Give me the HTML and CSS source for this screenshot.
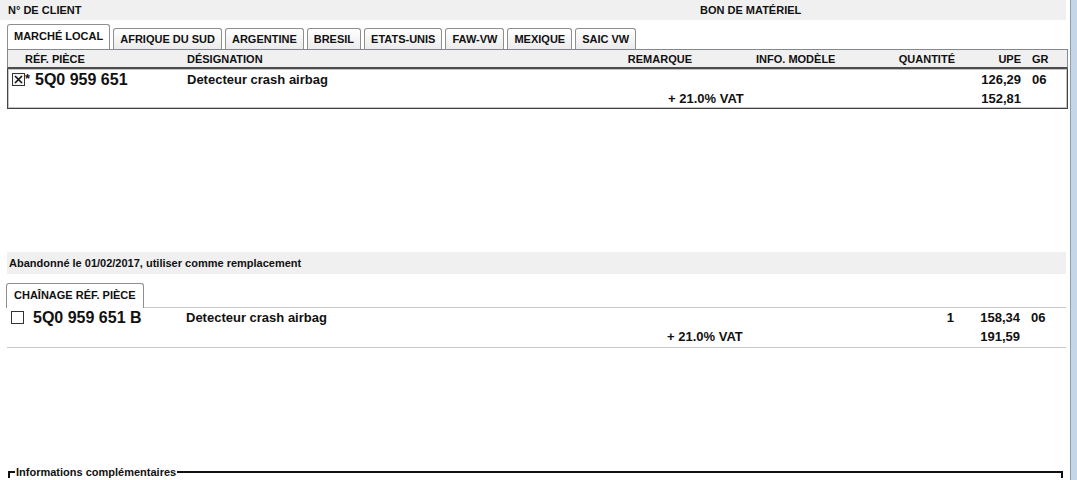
FILE: index.html
```html
<!DOCTYPE html>
<html lang="fr">
<head>
    <meta charset="UTF-8">
    <title>Bon de matériel</title>
    <link rel="stylesheet" href="styles.css">
</head>
<body>
<div class="screen">
    <div class="page">
        <div class="topbar">
            <span>N° DE CLIENT</span>
            <span>BON DE MATÉRIEL</span>
        </div>

        <!-- market tabs -->
        <div class="tabs">
            <span class="tab active">MARCHÉ LOCAL</span>
            <span class="tab">AFRIQUE DU SUD</span>
            <span class="tab">ARGENTINE</span>
            <span class="tab">BRESIL</span>
            <span class="tab">ETATS-UNIS</span>
            <span class="tab">FAW-VW</span>
            <span class="tab">MEXIQUE</span>
            <span class="tab">SAIC VW</span>
        </div>

        <div class="grid-head cols">
            <span class="c-ref">RÉF. PIÈCE</span>
            <span>DÉSIGNATION</span>
            <span class="right">REMARQUE</span>
            <span class="c-info">INFO. MODÈLE</span>
            <span class="right">QUANTITÉ</span>
            <span class="right">UPE</span>
            <span class="c-gr">GR</span>
        </div>

        <div class="grid-body">
            <div class="cols line">
                <span class="c-part">
                    <svg class="check" width="13" height="13" viewBox="0 0 13 13">
                        <rect x="0.5" y="0.5" width="12" height="12" fill="#f4f4f4" stroke="#333"/>
                        <path d="M3 3 L10 10 M10 3 L3 10" stroke="#111" stroke-width="1.6"/>
                    </svg>
                    <sup class="star">*</sup>
                    <span class="part-no">5Q0 959 651</span>
                </span>
                <span class="big">Detecteur crash airbag</span>
                <span></span>
                <span></span>
                <span></span>
                <span class="right big">126,29</span>
                <span class="c-gr big">06</span>
            </div>
            <div class="cols line">
                <span></span>
                <span></span>
                <span class="vat big">+ 21.0% VAT</span>
                <span></span>
                <span class="right big">152,81</span>
                <span></span>
            </div>
        </div>

        <div class="notice">Abandonné le 01/02/2017, utiliser comme remplacement</div>

        <div class="tabs tabs-single">
            <span class="tab active">CHAÎNAGE RÉF. PIÈCE</span>
        </div>

        <div class="chain">
            <div class="cols line">
                <span class="c-part">
                    <svg class="check" width="13" height="13" viewBox="0 0 13 13">
                        <rect x="0.5" y="0.5" width="12" height="12" fill="#fff" stroke="#333"/>
                    </svg>
                    <span class="part-no">5Q0 959 651 B</span>
                </span>
                <span class="big">Detecteur crash airbag</span>
                <span></span>
                <span></span>
                <span class="right big">1</span>
                <span class="right big">158,34</span>
                <span class="c-gr big">06</span>
            </div>
            <div class="cols line">
                <span></span>
                <span></span>
                <span class="vat big">+ 21.0% VAT</span>
                <span></span>
                <span class="right big">191,59</span>
                <span></span>
            </div>
        </div>

        <fieldset class="extra">
            <legend>Informations complémentaires</legend>
        </fieldset>
    </div>
    <div class="edge"><div class="edge-bar"></div></div>
</div>
</body>
</html>
```

FILE: styles.css
```css
body {
    margin: 0;
    font-family: "Liberation Sans", Arial, sans-serif;
    font-weight: bold;
    font-size: 11px;
    color: #111;
    background-color: #ffffff;
    overflow: hidden;
}

.screen {
    display: flex;
    height: 480px;
    overflow: hidden;
}

.page {
    width: 1070px;
}

.edge {
    flex: 1;
    border-left: 1px solid #8f9cab;
    background-color: #c6d6ea;
}

.topbar {
    display: grid;
    grid-template-columns: 692px 1fr;
    align-items: center;
    width: 1058px;
    height: 20px;
    padding-left: 8px;
    background-color: #f0f0f0;
}

.tabs {
    display: flex;
    align-items: flex-end;
    gap: 3px;
    height: 24px;
    margin-top: 5px;
    padding-left: 7px;
}

.tab {
    height: 20px;
    line-height: 20px;
    padding: 0 6px;
    border: 1px solid #8e8f8f;
    border-bottom: none;
    border-radius: 3px 3px 0 0;
    background: linear-gradient(#ffffff, #ebebeb);
}

.tab.active {
    height: 24px;
    line-height: 23px;
    background: #ffffff;
}

.cols {
    display: grid;
    grid-template-columns: 179px 413px 92px 188px 75px 66px 1fr;
    align-items: center;
}

.right {
    text-align: right;
}

.c-ref {
    padding-left: 17px;
}

.c-info {
    padding-left: 64px;
}

.c-gr {
    padding-left: 11px;
}

.grid-head {
    box-sizing: border-box;
    width: 1061px;
    height: 20px;
    margin-left: 7px;
    border: 1px solid #828790;
    border-bottom: 2px solid #4d4d4d;
    background-color: #f0f0f0;
}

.grid-body {
    box-sizing: border-box;
    width: 1061px;
    height: 40px;
    margin-left: 7px;
    border: 1px solid #444;
    border-top: none;
    box-shadow: inset 0 0 0 1px #c4c4c4;
    padding-top: 1px;
}

.line {
    height: 19px;
}

.big {
    font-size: 13px;
}

.c-part {
    display: flex;
    align-items: center;
    padding-left: 4px;
}

.check {
    display: block;
}

.star {
    font-size: 13px;
    width: 10px;
    line-height: 1;
    align-self: flex-start;
    margin-top: 1px;
}

.part-no {
    font-size: 16px;
    margin-left: 9px;
}

.star + .part-no {
    margin-left: 0;
}

.vat {
    grid-column: 3 / 5;
    padding-left: 68px;
}

.notice {
    box-sizing: border-box;
    width: 1059px;
    height: 22px;
    line-height: 22px;
    margin: 143px 0 0 7px;
    padding-left: 2px;
    background-color: #f0f0f0;
}

.tabs-single {
    margin-top: 9px;
    padding-left: 6px;
}

.tabs-single .tab {
    position: relative;
    z-index: 1;
    margin-bottom: -1px;
    padding: 0 7px;
}

.chain {
    box-sizing: border-box;
    width: 1059px;
    margin-left: 7px;
    border-top: 1px solid #c8c8c8;
    border-bottom: 1px solid #c8c8c8;
    padding-bottom: 1px;
}

.extra {
    width: 1041px;
    height: 4px;
    margin: 118px 0 0 8px;
    padding: 0 5px;
    border: 2px solid #111;
    border-bottom: none;
}

.extra legend {
    padding: 0 1px;
    font-size: 11px;
}
```
